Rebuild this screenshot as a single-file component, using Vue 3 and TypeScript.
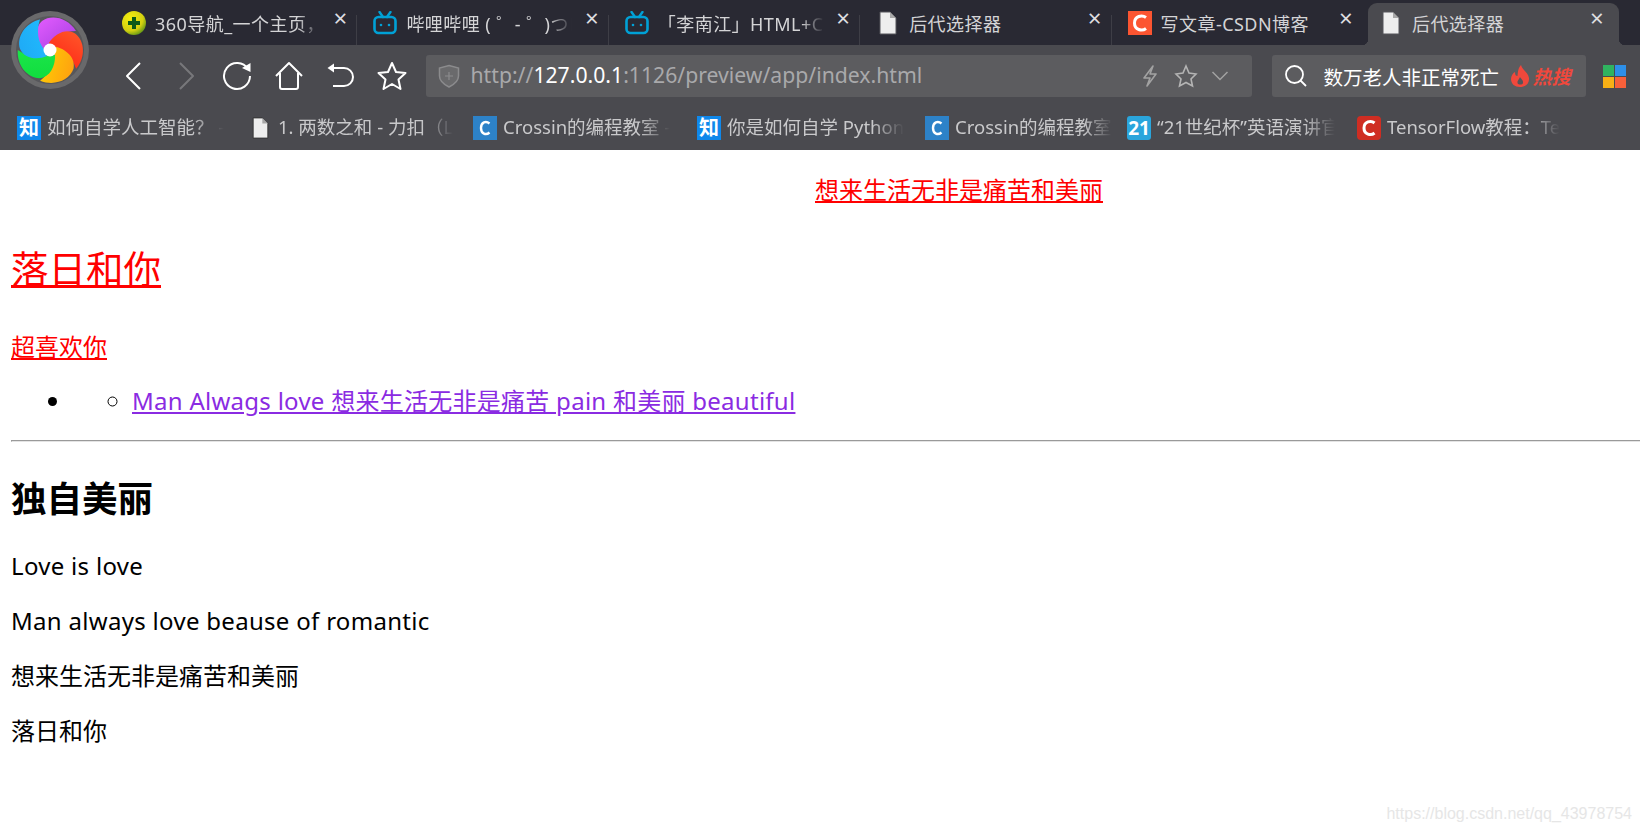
<script setup lang="ts">
interface Tab {
  icon: string
  title: string
  active?: boolean
}

interface Bookmark {
  icon: string
  title: string
  width: number
}

const tabs: Tab[] = [
  { icon: 'nav', title: '360导航_一个主页，' },
  { icon: 'bili', title: '哔哩哔哩 ( ゜- ゜)つロ' },
  { icon: 'bili', title: '「李南江」HTML+C' },
  { icon: 'doc', title: '后代选择器' },
  { icon: 'csdn', title: '写文章-CSDN博客' },
  { icon: 'doc', title: '后代选择器', active: true }
]

const bookmarks: Bookmark[] = [
  { icon: 'zhi', title: '如何自学人工智能？ -', width: 235 },
  { icon: 'doc', title: '1. 两数之和 - 力扣（L', width: 221 },
  { icon: 'crossin', title: 'Crossin的编程教室 -', width: 224 },
  { icon: 'zhi', title: '你是如何自学 Python', width: 228 },
  { icon: 'crossin', title: 'Crossin的编程教室', width: 202 },
  { icon: 'cup', title: '“21世纪杯”英语演讲官', width: 230 },
  { icon: 'tf', title: 'TensorFlow教程：Te', width: 220 }
]

const blades = [
  { from: '#e45cff', to: '#a53fe0', angle: 0 },
  { from: '#ff5a2a', to: '#ff1f14', angle: 72 },
  { from: '#ff9a12', to: '#ffd800', angle: 144 },
  { from: '#0fdc3c', to: '#20e850', angle: 216 },
  { from: '#1fa8f5', to: '#20c0ff', angle: 288 }
]

const latinParagraphs = ['Love is love', 'Man always love beause of romantic']
const cjkParagraphs = ['想来生活无非是痛苦和美丽', '落日和你']
</script>

<template>
  <div class="page">
    <header class="browser">
      <svg class="logo" viewBox="-40 -40 80 80" width="80" height="80">
        <defs>
          <linearGradient v-for="(b, i) in blades" :id="`blade${i}`" :key="i" x1="0" y1="0" x2="1" y2="1">
            <stop offset="0" :stop-color="b.from" />
            <stop offset="1" :stop-color="b.to" />
          </linearGradient>
        </defs>
        <circle r="39" fill="#69696b" />
        <circle r="34" fill="#57575b" />
        <path
          v-for="(b, i) in blades"
          :key="i"
          d="M-7 -1C-14 -10 -16 -22 -8 -29C2 -36 18 -32 26 -19C14 -19 4 -14 -1 -6Z"
          :fill="`url(#blade${i})`"
          :transform="`rotate(${b.angle})`"
        />
        <circle r="6.5" fill="#fff" />
      </svg>

      <div class="tabstrip">
        <div v-for="(tab, i) in tabs" :key="i" class="tab" :class="{ active: tab.active }">
          <span class="favicon">
            <svg v-if="tab.icon === 'nav'" viewBox="0 0 24 24" width="24" height="24">
              <defs>
                <radialGradient id="navfill" cx="0.35" cy="0.3" r="0.8">
                  <stop offset="0" stop-color="#f4ee10" />
                  <stop offset="0.65" stop-color="#d4d010" />
                  <stop offset="1" stop-color="#4a8a18" />
                </radialGradient>
              </defs>
              <circle cx="12" cy="12" r="12" fill="url(#navfill)" />
              <path d="M12 6V18M6 12H18" stroke="#0d5a18" stroke-width="4" />
            </svg>
            <svg v-else-if="tab.icon === 'bili'" viewBox="0 0 24 24" width="24" height="24">
              <rect x="1.5" y="6" width="21" height="16" rx="4" fill="none" stroke="#00a1d6" stroke-width="2.6" />
              <path d="M6.5 1L10 6M17.5 1L14 6" stroke="#00a1d6" stroke-width="2.4" stroke-linecap="round" />
              <circle cx="8" cy="14" r="1.3" fill="#00a1d6" />
              <circle cx="16" cy="14" r="1.3" fill="#00a1d6" />
            </svg>
            <svg v-else-if="tab.icon === 'doc'" viewBox="0 0 24 24" width="24" height="24">
              <path d="M4 1H14L20 7V23H4Z" fill="#eeeeee" stroke="#55555a" />
              <path d="M14 1V7H20" fill="#a8a8a8" />
            </svg>
            <svg v-else viewBox="0 0 24 24" width="24" height="24">
              <rect width="24" height="24" fill="#fc5531" />
              <path d="M18 6.5C14 3.5 6.5 5 6.5 12S14 20.500 18 17.500" fill="none" stroke="#fff" stroke-width="3" />
            </svg>
          </span>
          <span class="tab-title">{{ tab.title }}</span>
          <span class="tab-close">×</span>
        </div>
      </div>

      <div class="toolbar">
        <div class="nav-buttons">
          <svg viewBox="0 0 30 30" width="30" height="30">
            <path d="M21 2L8 15L21 28" class="line" />
          </svg>
          <svg viewBox="0 0 30 30" width="30" height="30">
            <path d="M9 2L22 15L9 28" class="line dim" />
          </svg>
          <svg viewBox="0 0 30 30" width="30" height="30">
            <path d="M26 8A13 13 0 1 0 28 15" class="line" />
            <path d="M20 7L28.500 2V11Z" fill="#fff" />
          </svg>
          <svg viewBox="0 0 30 30" width="30" height="30">
            <path d="M2 15L15 2L28 15M6 12V26Q6 28 8 28H22Q24 28 24 26V12" class="line" />
          </svg>
          <svg viewBox="0 0 30 30" width="30" height="30">
            <path d="M8 7H19A9 9 0 0 1 19 25H8" class="line" />
            <path d="M9 2.500V11.500L2.500 7Z" fill="#fff" />
          </svg>
          <svg viewBox="0 0 30 30" width="30" height="30">
            <path d="M15 2L19 11L28.500 12L21.500 18.500L23.500 28L15 23L6.500 28L8.500 18.500L1.500 12L11 11Z" class="line" />
          </svg>
        </div>

        <div class="address">
          <svg viewBox="0 0 22 24" width="22" height="24">
            <path d="M11 1.500L20.500 4V12C20.500 18 15 21 11 23C7 21 1.500 18 1.500 12V4Z" fill="#6a6a6c" stroke="#8b8b8d" stroke-width="1.500" />
            <path d="M11 8V16M7 12H15" stroke="#8b8b8d" stroke-width="1.200" />
          </svg>
          <span class="url">http://<b>127.0.0.1</b>:1126/preview/app/index.html</span>
          <svg class="addr-bolt" viewBox="0 0 18 24" width="18" height="24">
            <path d="M12 2L3 14H9L6 22L15 10H9Z" fill="none" stroke="#a2a2a2" stroke-width="1.600" stroke-linejoin="round" />
          </svg>
          <svg class="addr-star" viewBox="0 0 24 24" width="24" height="24">
            <path d="M12 2L15 9L22 10L17 15L18.500 22L12 18.500L5.500 22L7 15L2 10L9 9Z" fill="none" stroke="#b4b4b4" stroke-width="1.600" />
          </svg>
          <svg class="addr-more" viewBox="0 0 18 12" width="18" height="12">
            <path d="M1.500 2L9 9.500L16.500 2" fill="none" stroke="#a2a2a2" stroke-width="1.500" />
          </svg>
        </div>

        <div class="search">
          <svg viewBox="0 0 24 24" width="24" height="24">
            <circle cx="10.500" cy="10.500" r="8.500" fill="none" stroke="#fff" stroke-width="1.800" />
            <path d="M16.500 16.500L22 22" stroke="#fff" stroke-width="1.800" />
          </svg>
          <span class="search-text">数万老人非正常死亡</span>
          <svg viewBox="0 0 20 24" width="20" height="24">
            <path d="M11 1C12 6 18 8 19 14C19.500 20 15 23 10 23C5 23 1 20 1 15C1 12 3 9 5 8C5 11 6 12 7.500 12C8 8 8 4 11 1Z" fill="#f0483c" />
            <path d="M10 13C11 15 13.500 16 13 19C12.500 21 8 21 7.500 19C7 17 9 15.500 10 13Z" fill="#55555a" />
          </svg>
          <span class="hot">热搜</span>
        </div>

        <div class="apps">
          <i class="green"></i><i class="blue"></i><i class="yellow"></i><i class="orange"></i>
        </div>
      </div>

      <div class="bookmarks">
        <div v-for="(b, i) in bookmarks" :key="i" class="bookmark" :style="{ width: b.width + 'px' }">
          <span v-if="b.icon === 'zhi'" class="mark mark-zhi">知</span>
          <svg v-else-if="b.icon === 'doc'" class="mark-doc" viewBox="3 0 18 24" width="17" height="22">
            <path d="M4 1H14L20 7V23H4Z" fill="#eeeeee" stroke="#333" />
            <path d="M14 1V7H20" fill="#a8a8a8" />
          </svg>
          <svg v-else-if="b.icon === 'crossin'" viewBox="0 0 24 24" width="24" height="24">
            <rect width="24" height="24" fill="#2d82c8" />
            <path d="M16.500 7.500C13 4.500 8 6 8 12S13 19.500 16.500 16.500" fill="none" stroke="#fff" stroke-width="2.400" />
          </svg>
          <span v-else-if="b.icon === 'cup'" class="mark mark-cup">21</span>
          <svg v-else viewBox="0 0 24 24" width="24" height="24">
            <rect width="24" height="24" rx="4" fill="#cf2d22" />
            <path d="M17.500 7C14 4 7 5.500 7 12S14 20 17.500 17" fill="none" stroke="#fff" stroke-width="3" />
          </svg>
          <span class="bookmark-title">{{ b.title }}</span>
        </div>
      </div>
    </header>

    <main class="content">
      <div class="centered"><a>想来生活无非是痛苦和美丽</a></div>
      <h1><a>落日和你</a></h1>
      <p class="love"><a>超喜欢你</a></p>
      <ul>
        <li>
          <ul>
            <li><a class="visited">Man Alwags love 想来生活无非是痛苦 pain 和美丽 beautiful</a></li>
          </ul>
        </li>
      </ul>
      <hr />
      <h2>独自美丽</h2>
      <p v-for="text in latinParagraphs" :key="text" class="para latin">{{ text }}</p>
      <p v-for="text in cjkParagraphs" :key="text" class="para">{{ text }}</p>
    </main>

    <span class="watermark">https://blog.csdn.net/qq_43978754</span>
  </div>
</template>

<style scoped>
.page {
  position: relative;
  width: 1640px;
  height: 830px;
  overflow: hidden;
  background: #fff;
  color: #000;
  font-family: "Noto Sans", "Noto Sans CJK SC", sans-serif;
}

.browser {
  position: relative;
  height: 150px;
  background: #4a4a4f;
}

.logo {
  position: absolute;
  left: 10px;
  top: 10px;
  z-index: 2;
}

.tabstrip {
  display: flex;
  height: 45px;
  padding-left: 106px;
  background: #292933;
}

.tab {
  position: relative;
  display: flex;
  align-items: center;
  flex: 0 0 251.400px;
  box-sizing: border-box;
  padding-left: 16px;
  color: #d4d4d6;
  font-size: 18px;
  letter-spacing: 0.45px;
}

.tab::after {
  content: '';
  position: absolute;
  right: 0;
  top: 15px;
  height: 30px;
  width: 1px;
  background: #3e3e46;
}

.tab.active {
  flex-basis: 251px;
  margin: 3px 0 0 5px;
  padding: 0 0 3px 11px;
  background: #4a4a4f;
  border-radius: 9px 9px 0 0;
}

.tab.active::before {
  content: '';
  position: absolute;
  left: -6px;
  bottom: 0;
  width: 6px;
  height: 6px;
  background: radial-gradient(circle at 0 0, transparent 6px, #4a4a4f 6.500px);
}

.tab.active::after {
  display: block;
  right: -6px;
  top: auto;
  bottom: 0;
  width: 6px;
  height: 6px;
  background: radial-gradient(circle at 100% 0, transparent 6px, #4a4a4f 6.500px);
}

.tab:nth-child(5)::after {
  display: none;
}

.favicon {
  display: flex;
  width: 24px;
  height: 24px;
  margin-right: 9px;
}

.tab-title {
  width: 166px;
  overflow: hidden;
  white-space: pre;
  -webkit-mask-image: linear-gradient(to right, #000 86%, transparent);
  mask-image: linear-gradient(to right, #000 86%, transparent);
}

.tab:nth-child(n + 4) .tab-title {
  -webkit-mask-image: none;
  mask-image: none;
}

.tab-close {
  position: absolute;
  right: 7px;
  top: 4px;
  width: 20px;
  text-align: center;
  font-size: 24px;
  line-height: 28px;
  letter-spacing: 0;
  color: #dedee0;
}

.tab.active .tab-close {
  right: 12px;
  top: 1px;
}

.toolbar {
  display: flex;
  align-items: center;
  height: 42px;
  padding: 10px 0 0 119px;
}

.nav-buttons {
  display: flex;
  gap: 21.500px;
}

.line {
  fill: none;
  stroke: #fff;
  stroke-width: 2;
  stroke-linejoin: round;
}

.line.dim {
  stroke: #77777b;
}

.address {
  display: flex;
  align-items: center;
  box-sizing: border-box;
  width: 826px;
  height: 42px;
  margin-left: 19px;
  padding-left: 12px;
  background: #5c5c5f;
  border-radius: 3px;
}

.url {
  margin: 0 0 4px 11px;
  color: #a9a9ab;
  font-size: 21.200px;
  white-space: nowrap;
}

.url b {
  color: #fff;
  font-weight: 400;
}

.addr-bolt {
  margin-left: auto;
}

.addr-star {
  margin-left: 15px;
}

.addr-more {
  margin: 0 23px 0 13px;
}

.search {
  display: flex;
  align-items: center;
  box-sizing: border-box;
  width: 314px;
  height: 42px;
  margin-left: 20px;
  padding-left: 12px;
  background: #5c5c5f;
  border-radius: 3px;
}

.search-text {
  width: 176px;
  margin: 0 10px 0 16px;
  color: #fff;
  font-size: 19.500px;
  white-space: nowrap;
}

.hot {
  margin-left: 3px;
  color: #f0483c;
  font-size: 19px;
  font-style: italic;
  font-weight: 700;
}

.apps {
  display: grid;
  grid-template-columns: 11px 11px;
  grid-template-rows: 11px 11px;
  gap: 1px;
  margin-left: 17px;
}

.apps i {
  display: block;
}

.green { background: #2fb35f; }
.blue { background: #2d8fe8; }
.yellow { background: #f7b016; }
.orange { background: #f7603a; }

.bookmarks {
  display: flex;
  align-items: center;
  height: 45px;
  padding: 8px 0 0 17px;
}

.bookmark {
  display: flex;
  align-items: center;
  gap: 6px;
  flex: none;
  overflow: hidden;
}

.bookmark svg,
.mark {
  flex: none;
}

.mark-doc {
  margin-right: 3px;
}

.mark {
  display: block;
  width: 24px;
  height: 24px;
  color: #fff;
  text-align: center;
  font-size: 20px;
  font-weight: 700;
  line-height: 24px;
}

.mark-zhi {
  background: #0f88eb;
}

.mark-cup {
  border-radius: 3px;
  background: #2aa5dc;
  font-size: 19px;
}

.bookmark-title {
  max-width: 178px;
  margin-bottom: 4px;
  color: #c9c9cb;
  font-size: 18.500px;
  white-space: nowrap;
  -webkit-mask-image: linear-gradient(to right, #000 82%, transparent);
  mask-image: linear-gradient(to right, #000 82%, transparent);
}

.content {
  width: 1896px;
  margin-left: 11px;
  font-size: 24px;
  line-height: 31px;
}

a {
  color: #f00;
  text-decoration: underline;
}

a.visited {
  color: #8a2be2;
  letter-spacing: 0.27px;
}

.centered {
  padding-top: 24px;
  text-align: center;
}

h1 {
  margin: 39px 0 0;
  font-size: 37.500px;
  font-weight: 400;
  line-height: 50px;
}

.love {
  margin: 37px 0 0;
}

ul {
  margin: 0;
  padding-left: 61px;
}

.content > ul {
  margin-top: 23px;
}

.content > ul ul {
  padding-left: 60px;
  list-style-type: circle;
}

hr {
  margin: 24px 0 0;
  border: none;
  border-top: 1px solid #9a9a9a;
  border-bottom: 1px solid #e4e4e4;
  border-left: 1px solid #9a9a9a;
}

h2 {
  margin: 32px 0 0;
  font-size: 35.500px;
  font-weight: 700;
  line-height: 48px;
}

.para {
  margin: 24px 0 0;
}

.latin {
  letter-spacing: 0.3px;
}

h2 + .para {
  margin-top: 28px;
}

.watermark {
  position: absolute;
  right: 8px;
  bottom: 7px;
  color: #e6e6e6;
  font-family: "Liberation Sans", sans-serif;
  font-size: 16px;
}
</style>
